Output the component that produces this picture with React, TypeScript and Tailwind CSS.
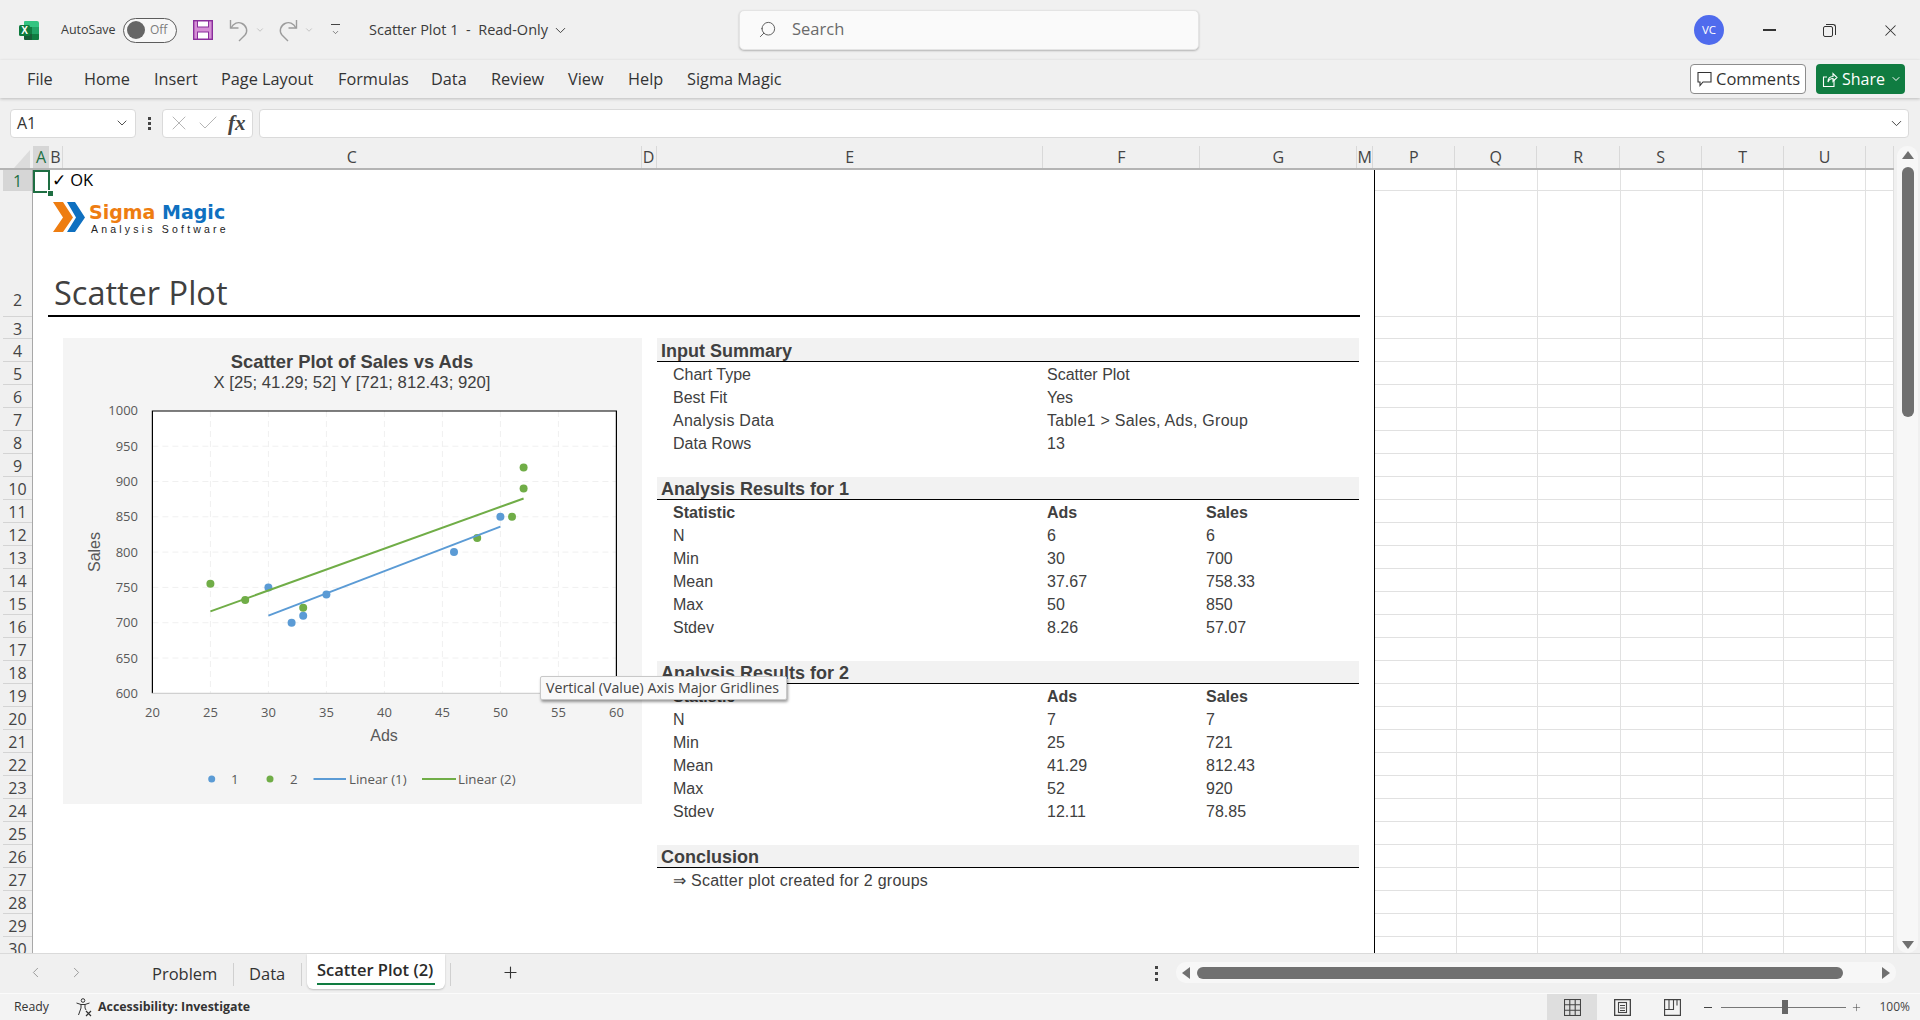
import React from "react";
import { ChevronDown, ChevronLeft, ChevronRight, Check, X, Plus, Search } from "lucide-react";

const UI = "font-['Open_Sans',sans-serif]";
const SHEET = "font-['Liberation_Sans',Arial,sans-serif]";

const ROWS: [string, number][] = [["1", 21], ["2", 126], ["3", 22]];
for (let i = 4; i <= 30; i++) ROWS.push([String(i), 23]);

const COLS: [string, number][] = [
  ["A", 16], ["B", 14], ["C", 579], ["D", 15], ["E", 387], ["F", 157], ["G", 157], ["M", 16],
  ["P", 82], ["Q", 82], ["R", 83], ["S", 82], ["T", 82], ["U", 82], ["", 28],
];

function ExcelLogo() {
  return (
    <svg width="21" height="21" viewBox="0 0 21 21">
      <path d="M6 1h12a2 2 0 0 1 2 2v4H5V2a1 1 0 0 1 1-1z" fill="#33c481" />
      <rect x="5" y="7" width="8" height="7" fill="#107c41" />
      <rect x="13" y="7" width="7" height="7" fill="#21a366" />
      <path d="M5 14h8v6H6a1 1 0 0 1-1-1z" fill="#185c37" />
      <path d="M13 14h7v5a1 1 0 0 1-1 1h-6z" fill="#107c41" />
      <rect x="0" y="5" width="11" height="11" rx="1.5" fill="#0f7a3d" />
      <text x="5.5" y="14" textAnchor="middle" fontSize="10" fontWeight="700" fill="#fff" fontFamily="Liberation Sans">X</text>
    </svg>
  );
}

function SaveIcon() {
  return (
    <svg width="20" height="20" viewBox="0 0 20 20">
      <rect x="0.7" y="0.7" width="18.6" height="18.6" fill="#d68fd6" stroke="#8a2e9c" strokeWidth="1.4" />
      <rect x="4.5" y="1" width="11" height="6" fill="#fff" stroke="#8a2e9c" />
      <rect x="4.5" y="12" width="11" height="7" fill="#fff" stroke="#8a2e9c" />
    </svg>
  );
}

function UndoIcon({ flip }: { flip?: boolean }) {
  return (
    <svg width="20" height="24" viewBox="0 0 20 24" fill="none" stroke="#9c9c9c" strokeWidth="1.4" className={flip ? "scale-x-[-1]" : ""}>
      <path d="M1.500 2v8h8" />
      <path d="M2 10C4.500 5 9 3.500 13 5.500c5 2.500 6 8 3 11.500l-6 6" />
    </svg>
  );
}

function TinyCaret() {
  return <ChevronDown size={10} color="#a8a8a8" strokeWidth={1.5} />;
}

function TitleBar() {
  return (
    <div className="flex items-center h-[60px] w-full text-[#3b3b3b]">
      <div className="ml-[19px] w-[42px] flex"><ExcelLogo /></div>
      <span className="w-[62px] text-[12.5px]">AutoSave</span>
      <div className="w-[54px] h-[25px] rounded-full border border-[#5c5c5c] flex items-center pl-[3px] bg-[#f7f7f7]">
        <span className="w-[18px] h-[18px] rounded-full bg-[#666666]" />
        <span className="ml-[5px] text-[12px] text-[#7d7d7d]">Off</span>
      </div>
      <div className="ml-[16px] flex"><SaveIcon /></div>
      <div className="ml-[16px] flex"><UndoIcon /></div>
      <div className="ml-[6px] flex"><TinyCaret /></div>
      <div className="ml-[13px] flex"><UndoIcon flip /></div>
      <div className="ml-[6px] flex"><TinyCaret /></div>
      <div className="ml-[15px] w-[12px] flex flex-col items-center gap-[3px]">
        <span className="w-[9px] h-px bg-[#444444]" />
        <ChevronDown size={9} color="#444444" strokeWidth={1.7} />
      </div>
      <span className="ml-[28px] w-[178px] text-[14.5px] whitespace-pre">Scatter Plot 1  -  Read-Only</span>
      <ChevronDown size={17} color="#444444" strokeWidth={1.4} className="ml-[5px]" />
      <div className="ml-[170px] w-[460px] h-[40px] flex items-center rounded-[5px] bg-[#fafafa] border border-[#e4e4e4] shadow-[0_1px_2px_rgba(0,0,0,0.25)] pl-[18px] pb-[2px]">
        <Search size={19} color="#5a5a5a" strokeWidth={1.2} className="scale-x-[-1]" />
        <span className="ml-[15px] text-[16.5px] text-[#6a6a6a]">Search</span>
      </div>
      <div className="ml-[495px] w-[30px] h-[30px] rounded-full bg-[#4f6bed] flex items-center justify-center text-white text-[11.5px]">VC</div>
      <div className="ml-[39px] w-[13px] h-[1.5px] bg-[#333333]" />
      <div className="ml-[47px] relative w-[13px] h-[13px]">
        <span className="absolute left-0 bottom-0 w-[10px] h-[11px] border border-[#333333] rounded-[2px]" />
        <span className="absolute right-0 top-0 w-[10px] h-[11px] border-t border-r border-[#333333] rounded-tr-[3px]" />
      </div>
      <X size={19} color="#333333" strokeWidth={1.3} className="ml-[45px]" />
    </div>
  );
}

function TabsBar() {
  const tabs: [string, number][] = [
    ["File", 57], ["Home", 70], ["Insert", 67], ["Page Layout", 117], ["Formulas", 93],
    ["Data", 60], ["Review", 77], ["View", 60], ["Help", 59], ["Sigma Magic", 110],
  ];
  return (
    <div className="flex items-center h-[38px] relative z-10 shadow-[0_1px_3px_rgba(0,0,0,0.22)]">
      <div className="ml-[27px] flex text-[16.3px] text-[#333333]">
        {tabs.map(([t, w]) => (
          <span key={t} style={{ width: w }} className="whitespace-nowrap">{t}</span>
        ))}
      </div>
      <div className="ml-auto flex items-center h-[30px]">
        <div className="w-[116px] h-[30px] rounded-[4px] border border-[#8c8c8c] bg-white flex items-center pl-[6px] text-[#333333]">
          <svg width="15" height="16" viewBox="0 0 15 16" fill="none" stroke="#333333" strokeWidth="1.1">
            <path d="M1 1.500h13v9.500H6l-3 3.500v-3.500H1z" />
          </svg>
          <span className="ml-[4px] text-[16.5px]">Comments</span>
        </div>
        <div className="ml-[10px] mr-[15px] w-[89px] h-[30px] rounded-[4px] bg-[#107c41] flex items-center pl-[6px] text-white">
          <svg width="16" height="17" viewBox="0 0 16 17" fill="none" stroke="#fff" strokeWidth="1.1">
            <path d="M12 8v7.500H1.500V6H5" />
            <path d="M6 11c0-4 2-5.500 5-5.500V2.500l4 4-4 4V7.500c-2 0-4 1-5 3.500z" />
          </svg>
          <span className="ml-[4px] text-[16px]">Share</span>
          <ChevronDown size={12} color="#fff" strokeWidth={2} className="ml-[5px]" />
        </div>
      </div>
    </div>
  );
}

function FormulaBar() {
  return (
    <div className="flex items-center h-[48px] pl-[10px] pt-[2px] text-[#333333]">
      <div className="w-[126px] h-[29px] bg-white rounded-[4px] border border-[#dadada] flex items-center pl-[6px] pr-[5px]">
        <span className="text-[16px]">A1</span>
        <ChevronDown size={16} color="#444444" strokeWidth={1.4} className="ml-auto" />
      </div>
      <div className="w-[26px] flex flex-col items-center gap-[2px]">
        <span className="w-[3px] h-[3px] bg-[#444444]" />
        <span className="w-[3px] h-[3px] bg-[#444444]" />
        <span className="w-[3px] h-[3px] bg-[#444444]" />
      </div>
      <div className="w-[91px] h-[29px] bg-white rounded-[4px] border border-[#dadada] flex items-center pl-[4px]">
        <X size={24} color="#b5b5b5" strokeWidth={1} />
        <Check size={24} color="#b5b5b5" strokeWidth={1} className="ml-[5px]" />
        <span className="ml-[8px] text-[21px] leading-[24px] italic font-['Liberation_Serif',serif] font-bold text-[#444444]">fx</span>
      </div>
      <div className="ml-[6px] w-[1650px] h-[29px] bg-white rounded-[4px] border border-[#dadada] flex items-center justify-end pr-[3px]">
        <ChevronDown size={17} color="#444444" strokeWidth={1.4} />
      </div>
    </div>
  );
}

function ColHeaders() {
  return (
    <div className="flex h-[24px] shrink-0 border-b-2 border-[#b4b4b4] text-[16px] text-[#444444]">
      <div className="w-[33px]">
        <svg width="33" height="22" viewBox="0 0 33 22" className="block">
          <path d="M30 4v18H14z" fill="#dcdcdc" />
        </svg>
      </div>
      {COLS.map(([c, w], i) => (
        <div
          key={c || "x"}
          style={{ width: w }}
          className={
            i === 0
              ? "flex items-center justify-center bg-[#d6d6d6] text-[#1e7145]"
              : "flex items-center justify-center border-r border-[#d9d9d9]"
          }
        >
          {c}
        </div>
      ))}
    </div>
  );
}

function RowHeaders() {
  return (
    <div className="w-[33px] shrink-0 overflow-hidden border-r border-[#a8a8a8] pl-[3px]">
      {ROWS.map(([r, h], i) => (
        <div
          key={r}
          style={{ height: h }}
          className={
            (i === 0 ? "bg-[#d6d6d6] text-[#1e7145] " : "text-[#444444] ") +
            (i === 1 ? "items-end pb-[4px] " : "items-center pt-[2px] ") +
            "flex justify-center text-[16px] border-b border-[#d4d4d4]"
          }
        >
          {r}
        </div>
      ))}
    </div>
  );
}

function Logo() {
  return (
    <div className="flex items-start ml-[5px] mt-[11px] h-[34px]">
      <svg width="32" height="31" viewBox="0 0 32 31" className="shrink-0">
        <path d="M0 0h10l10 15.500L10 30H0l10-14.500z" fill="#ee7d11" />
        <path d="M14 0h8l10 15.500L22 30h-8l9-14.500z" fill="#0f70c0" />
      </svg>
      <div className="ml-[4px] flex flex-col font-['Liberation_Sans',Arial,sans-serif]">
        <div className="text-[19px] font-bold leading-[21px] font-['DejaVu_Sans',sans-serif] whitespace-nowrap">
          <span className="text-[#ee7d11]">Sigma</span>
          <span className="text-[#0f70c0]"> Magic</span>
        </div>
        <div className="text-[10.5px] leading-[11px] tracking-[3.2px] text-[#222222] whitespace-nowrap mt-[1px] ml-[2px]">Analysis Software</div>
      </div>
    </div>
  );
}

function Chart() {
  const X0 = 89.4;
  const Y0 = 355.3;
  const px = (x: number) => X0 + (x - 20) * 11.6;
  const py = (y: number) => Y0 - (y - 600) * 0.706;
  const xs = [20, 25, 30, 35, 40, 45, 50, 55, 60];
  const ys = [600, 650, 700, 750, 800, 850, 900, 950, 1000];
  const g1 = [[30, 750], [32, 700], [33, 710], [35, 740], [46, 800], [50, 850]];
  const g2 = [[25, 755], [28, 732], [33, 721], [48, 820], [51, 850], [52, 890], [52, 920]];
  const tick = { fontFamily: "Open Sans", fontSize: 13, fill: "#595959" };
  const leg = { fontFamily: "Open Sans", fontSize: 13.3, fill: "#595959" };
  const head = { fontFamily: "Liberation Sans", fill: "#404040" };
  return (
    <div className="w-[579px] h-[466px] bg-[#f4f4f4] shrink-0">
      <svg width="579" height="466" viewBox="0 0 579 466" className="block">
        <text x="289" y="30" textAnchor="middle" fontSize="18.400" fontWeight="700" {...head}>Scatter Plot of Sales vs Ads</text>
        <text x="289" y="50" textAnchor="middle" fontSize="16.700" {...head}>X [25; 41.29; 52] Y [721; 812.43; 920]</text>
        <rect x={X0} y={73} width={464} height={282.300} fill="#fff" />
        {xs.slice(1, -1).map((x) => (
          <line key={x} x1={px(x)} x2={px(x)} y1={73} y2={Y0} stroke="#f0f0f0" strokeDasharray="6 4" />
        ))}
        {ys.slice(1, -1).map((y) => (
          <line key={y} x1={X0} x2={X0 + 464} y1={py(y)} y2={py(y)} stroke="#f0f0f0" strokeDasharray="6 4" />
        ))}
        <path d={`M${X0} ${Y0}V73H${X0 + 464}V${Y0}`} fill="none" stroke="#000" strokeWidth="1.2" />
        <line x1={X0} x2={X0 + 464} y1={Y0} y2={Y0} stroke="#d0d0d0" strokeWidth="1.2" />
        {g1.map(([x, y], i) => <circle key={i} cx={px(x)} cy={py(y)} r="4" fill="#5b9bd5" />)}
        {g2.map(([x, y], i) => <circle key={i} cx={px(x)} cy={py(y)} r="4" fill="#70ad47" />)}
        <line x1={px(30)} y1={py(710)} x2={px(50)} y2={py(836)} stroke="#5b9bd5" strokeWidth="2" />
        <line x1={px(25)} y1={py(716)} x2={px(52)} y2={py(876)} stroke="#70ad47" strokeWidth="2" />
        {xs.map((x) => <text key={x} x={px(x)} y={379} textAnchor="middle" {...tick}>{x}</text>)}
        {ys.map((y) => <text key={y} x={75} y={py(y) + 4.500} textAnchor="end" {...tick}>{y}</text>)}
        <text x={321} y={403} textAnchor="middle" fontSize="16" fontFamily="Liberation Sans" fill="#595959">Ads</text>
        <text transform="translate(36.500 214) rotate(-90)" textAnchor="middle" fontSize="16" fontFamily="Liberation Sans" fill="#595959">Sales</text>
        <circle cx={148.700} cy={441} r="3.500" fill="#5b9bd5" />
        <text x={168} y={445.500} {...leg}>1</text>
        <circle cx={207} cy={441} r="3.500" fill="#70ad47" />
        <text x={227} y={445.500} {...leg}>2</text>
        <line x1={250.500} x2={283} y1={441} y2={441} stroke="#5b9bd5" strokeWidth="2" />
        <text x={286} y={445.500} {...leg}>Linear (1)</text>
        <line x1={359} x2={393} y1={441} y2={441} stroke="#70ad47" strokeWidth="2" />
        <text x={395} y={445.500} {...leg}>Linear (2)</text>
      </svg>
    </div>
  );
}

function Section({ title, first, children }: { title: string; first?: boolean; children: React.ReactNode }) {
  return (
    <div className="mb-[23px]">
      <div className={(first ? "h-[24px] " : "h-[23px] ") + "bg-[#f2f2f2] border-b-[1.5px] border-black flex items-end pl-[4px] text-[18px] leading-[19px] font-bold text-[#404040]"}>
        {title}
      </div>
      {children}
    </div>
  );
}

function Row({ a, b, c, bold, wide }: { a: string; b?: string; c?: string; bold?: boolean; wide?: boolean }) {
  return (
    <div
      className={
        "h-[23px] pt-[2px] flex items-center text-[16px] text-[#404040] whitespace-nowrap " +
        (bold ? "font-bold " : "") +
        (wide ? "tracking-[0.26px]" : "")
      }
    >
      <span className="w-[390px] pl-[16px]">{a}</span>
      <span className="w-[159px]">{b}</span>
      <span>{c}</span>
    </div>
  );
}

function Tables() {
  return (
    <div className={"ml-[15px] w-[702px] " + SHEET}>
      <Section title="Input Summary" first>
        <Row a="Chart Type" b="Scatter Plot" />
        <Row a="Best Fit" b="Yes" />
        <Row a="Analysis Data" b="Table1 > Sales, Ads, Group" wide />
        <Row a="Data Rows" b="13" />
      </Section>
      <Section title="Analysis Results for 1">
        <Row a="Statistic" b="Ads" c="Sales" bold />
        <Row a="N" b="6" c="6" />
        <Row a="Min" b="30" c="700" />
        <Row a="Mean" b="37.67" c="758.33" />
        <Row a="Max" b="50" c="850" />
        <Row a="Stdev" b="8.26" c="57.07" />
      </Section>
      <Section title="Analysis Results for 2">
        <Row a="Statistic" b="Ads" c="Sales" bold />
        <Row a="N" b="7" c="7" />
        <Row a="Min" b="25" c="721" />
        <Row a="Mean" b="41.29" c="812.43" />
        <Row a="Max" b="52" c="920" />
        <Row a="Stdev" b="12.11" c="78.85" />
      </Section>
      <Section title="Conclusion">
        <Row a="⇒ Scatter plot created for 2 groups" wide />
      </Section>
    </div>
  );
}

function Sheet() {
  return (
    <div className="w-[1342px] shrink-0 bg-white relative border-r border-black overflow-hidden">
      <div className="h-[21px] flex items-center">
        <div className="w-[19px] h-[21px] shrink-0" />
        <span className="text-[16.5px] text-black">✓ OK</span>
      </div>
      <div className="ml-[15px] w-[1312px] h-[126px] border-b-2 border-black flex flex-col">
        <Logo />
        <div className="mt-auto ml-[6px] text-[32.5px] leading-[44px] text-[#404040]">Scatter Plot</div>
      </div>
      <div className="flex pt-[21px]">
        <div className="ml-[30px]"><Chart /></div>
        <Tables />
      </div>
      {/* selection box */}
      <div className="absolute left-0 top-0 w-[17px] h-[23px] border-2 border-[#1e6e42]" />
      <div className="absolute left-[14px] top-[20px] w-[5px] h-[5px] bg-[#1e6e42] border border-white box-content" />
      {/* tooltip */}
      <div className="absolute left-[507px] top-[506px] w-[247px] h-[24px] bg-[#f9f9f9] border border-[#c8c8c8] rounded-[2px] shadow-[1px_2px_3px_rgba(0,0,0,0.4)] flex items-center pl-[5px] text-[14.2px] text-[#444444] whitespace-nowrap">
        Vertical (Value) Axis Major Gridlines
      </div>
    </div>
  );
}

function RightGrid() {
  return (
    <div className="w-[519px] shrink-0 overflow-hidden bg-white">
      {ROWS.map(([r, h]) => (
        <div key={r} style={{ height: h }} className="flex border-b border-[#e1e1e1]">
          {COLS.slice(8).map(([c, w]) => (
            <div key={c || "x"} style={{ width: w }} className="border-r border-[#e1e1e1] h-full" />
          ))}
        </div>
      ))}
    </div>
  );
}

function VScroll() {
  return (
    <div className="w-[26px] shrink-0 pl-[3px] pr-[2px]">
      <div className="h-[807px] rounded-[10px] bg-[#f7f7f7] flex flex-col items-center pt-[5px]">
        <span className="w-0 h-0 border-l-[6px] border-r-[6px] border-b-[8px] border-l-transparent border-r-transparent border-b-[#707070]" />
        <span className="mt-[8px] w-[12px] h-[250px] rounded-[6px] bg-[#707070]" />
        <span className="mt-auto mb-[4px] w-0 h-0 border-l-[6px] border-r-[6px] border-t-[8px] border-l-transparent border-r-transparent border-t-[#707070]" />
      </div>
    </div>
  );
}

function SheetTabs() {
  return (
    <div className="flex h-[40px] text-[#333333] border-t border-[#dadada]">
      <ChevronLeft size={17} color="#9a9a9a" strokeWidth={1.4} className="ml-[27px] mt-[10px]" />
      <ChevronRight size={17} color="#9a9a9a" strokeWidth={1.4} className="ml-[24px] mt-[10px]" />
      <span className="ml-[67px] w-[81px] pt-[9px] text-[16.5px] leading-[22px]">Problem</span>
      <span className="w-px h-[23px] bg-[#d0d0d0] mt-[9px]" />
      <span className="ml-[15px] w-[36px] pt-[9px] text-[16.5px] leading-[22px]">Data</span>
      <span className="ml-[16px] w-px h-[23px] bg-[#d0d0d0] mt-[9px]" />
      <div className="ml-[5px] w-[138px] h-[35px] bg-white rounded-b-[6px] shadow-[0_1px_2px_rgba(0,0,0,0.2)] px-[10px] pt-[5px] flex flex-col">
        <span className="text-[16.5px] font-semibold leading-[22px] text-[#2b2b2b] whitespace-nowrap">Scatter Plot (2)</span>
        <span className="h-[2px] bg-[#107c41] mt-[2px] w-[118px]" />
      </div>
      <span className="ml-[5px] w-px h-[23px] bg-[#d0d0d0] mt-[9px]" />
      <Plus size={19} color="#333333" strokeWidth={1.4} className="ml-[50px] mt-[9px]" />
      <div className="ml-[635px] w-[3px] flex flex-col gap-[3px] pt-[12px]">
        <span className="w-[3px] h-[3px] bg-[#444444]" />
        <span className="w-[3px] h-[3px] bg-[#444444]" />
        <span className="w-[3px] h-[3px] bg-[#444444]" />
      </div>
      <div className="ml-[18px] mt-[8px] w-[720px] h-[21px] rounded-[10px] bg-[#f7f7f7] flex items-center pl-[6px] pr-[6px]">
        <span className="w-0 h-0 border-t-[6px] border-b-[6px] border-r-[8px] border-t-transparent border-b-transparent border-r-[#707070]" />
        <span className="ml-[7px] w-[646px] h-[12px] rounded-[6px] bg-[#707070]" />
        <span className="ml-auto w-0 h-0 border-t-[6px] border-b-[6px] border-l-[8px] border-t-transparent border-b-transparent border-l-[#707070]" />
      </div>
    </div>
  );
}

function StatusBar() {
  return (
    <div className="flex items-center h-[27px] bg-[#f3f3f3] border-t border-[#fbfbfb] text-[#333333]">
      <span className="ml-[14px] w-[61px] text-[12.3px]">Ready</span>
      <svg width="19" height="19" viewBox="0 0 19 19" fill="none" stroke="#333333" strokeWidth="1">
        <circle cx="8" cy="2.500" r="1.800" />
        <path d="M1.500 5l4.500 1.500h4L14.500 5M6 6.500V10L3.500 17M10 6.500V10l1 2" />
        <path d="M11 13l5 5M16 13l-5 5" strokeWidth="1.2" />
      </svg>
      <span className="ml-[4px] text-[12.4px] font-bold whitespace-nowrap">Accessibility: Investigate</span>
      <div className="ml-auto w-[50px] h-[26px] bg-[#dedede] flex items-center justify-center">
        <svg width="17" height="17" viewBox="0 0 17 17" fill="none" stroke="#444444" strokeWidth="1.1">
          <rect x="0.5" y="0.5" width="16" height="16" />
          <path d="M5.800 0.500v16M11.200 0.500v16M0.500 5.800h16M0.500 11.200h16" />
        </svg>
      </div>
      <div className="w-[50px] flex justify-center">
        <svg width="17" height="17" viewBox="0 0 17 17" fill="none" stroke="#444444" strokeWidth="1.1">
          <rect x="0.500" y="0.500" width="16" height="16" strokeWidth="1.600" />
          <rect x="4.500" y="3.500" width="8" height="10" />
          <path d="M6 6.500h5M6 9h5M6 11.500h5" />
        </svg>
      </div>
      <div className="w-[50px] flex justify-center">
        <svg width="17" height="17" viewBox="0 0 17 17" fill="none" stroke="#444444" strokeWidth="1.1">
          <path d="M0.500 0.500h16v16h-16z" strokeWidth="1.300" />
          <path d="M0.500 10.500h9V0.500M5 0.500v10M13 0.500v6" />
        </svg>
      </div>
      <span className="ml-[7px] w-[8px] h-px bg-[#444444]" />
      <div className="ml-[9px] w-[125px] h-px bg-[#777777] relative">
        <span className="absolute left-[61px] -top-[7px] w-[6px] h-[14px] bg-[#666666]" />
      </div>
      <Plus size={11} color="#444444" strokeWidth={1.2} className="ml-[5px]" />
      <span className="ml-[17px] mr-[10px] text-[12px] text-[#444444]">100%</span>
    </div>
  );
}

export default function App() {
  return (
    <div className={"w-[1920px] h-[1020px] overflow-hidden bg-[#f0f0f0] flex flex-col " + UI}>
      <TitleBar />
      <TabsBar />
      <FormulaBar />
      <div className="flex h-[807px] shrink-0">
        <div className="w-[1894px] shrink-0 flex flex-col">
          <ColHeaders />
          <div className="flex h-[783px] overflow-hidden">
            <RowHeaders />
            <Sheet />
            <RightGrid />
          </div>
        </div>
        <VScroll />
      </div>
      <SheetTabs />
      <StatusBar />
    </div>
  );
}
